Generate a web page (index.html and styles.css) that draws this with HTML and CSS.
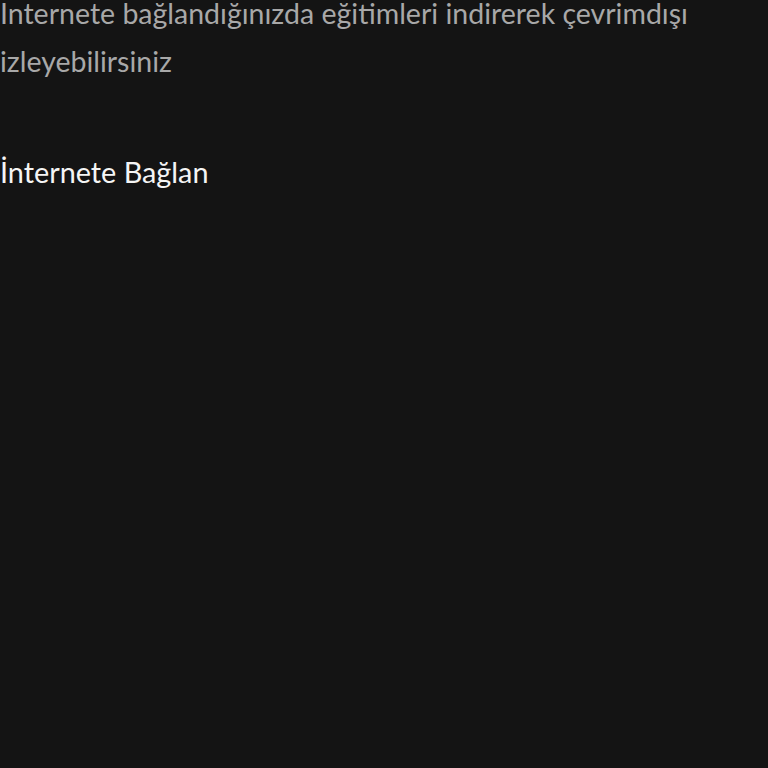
FILE: index.html
```html
<!DOCTYPE html>
<html lang="tr">
<head>
<meta charset="utf-8">
<link rel="stylesheet" href="styles.css">
</head>
<body>
<main class="offline">
  <p class="offline-text">Internete bağlandığınızda eğitimleri indirerek çevrimdışı izleyebilirsiniz</p>
  <a class="offline-link" href="#">İnternete Bağlan</a>
</main>
</body>
</html>
```

FILE: styles.css
```css
html, body {
  margin: 0;
  padding: 0;
  background: #141414;
  height: 100%;
}
.offline {
  font-family: Lato, "Open Sans", sans-serif;
  width: 740px;
}
.offline-text {
  margin: -11px 0 0 0;
  font-size: 28.5px;
  line-height: 48px;
  color: #a8a8a8;
}
.offline-link {
  display: block;
  margin-top: 70px;
  font-size: 28.8px;
  line-height: 1.2;
  color: #f5f5f5;
  text-decoration: none;
}
```
